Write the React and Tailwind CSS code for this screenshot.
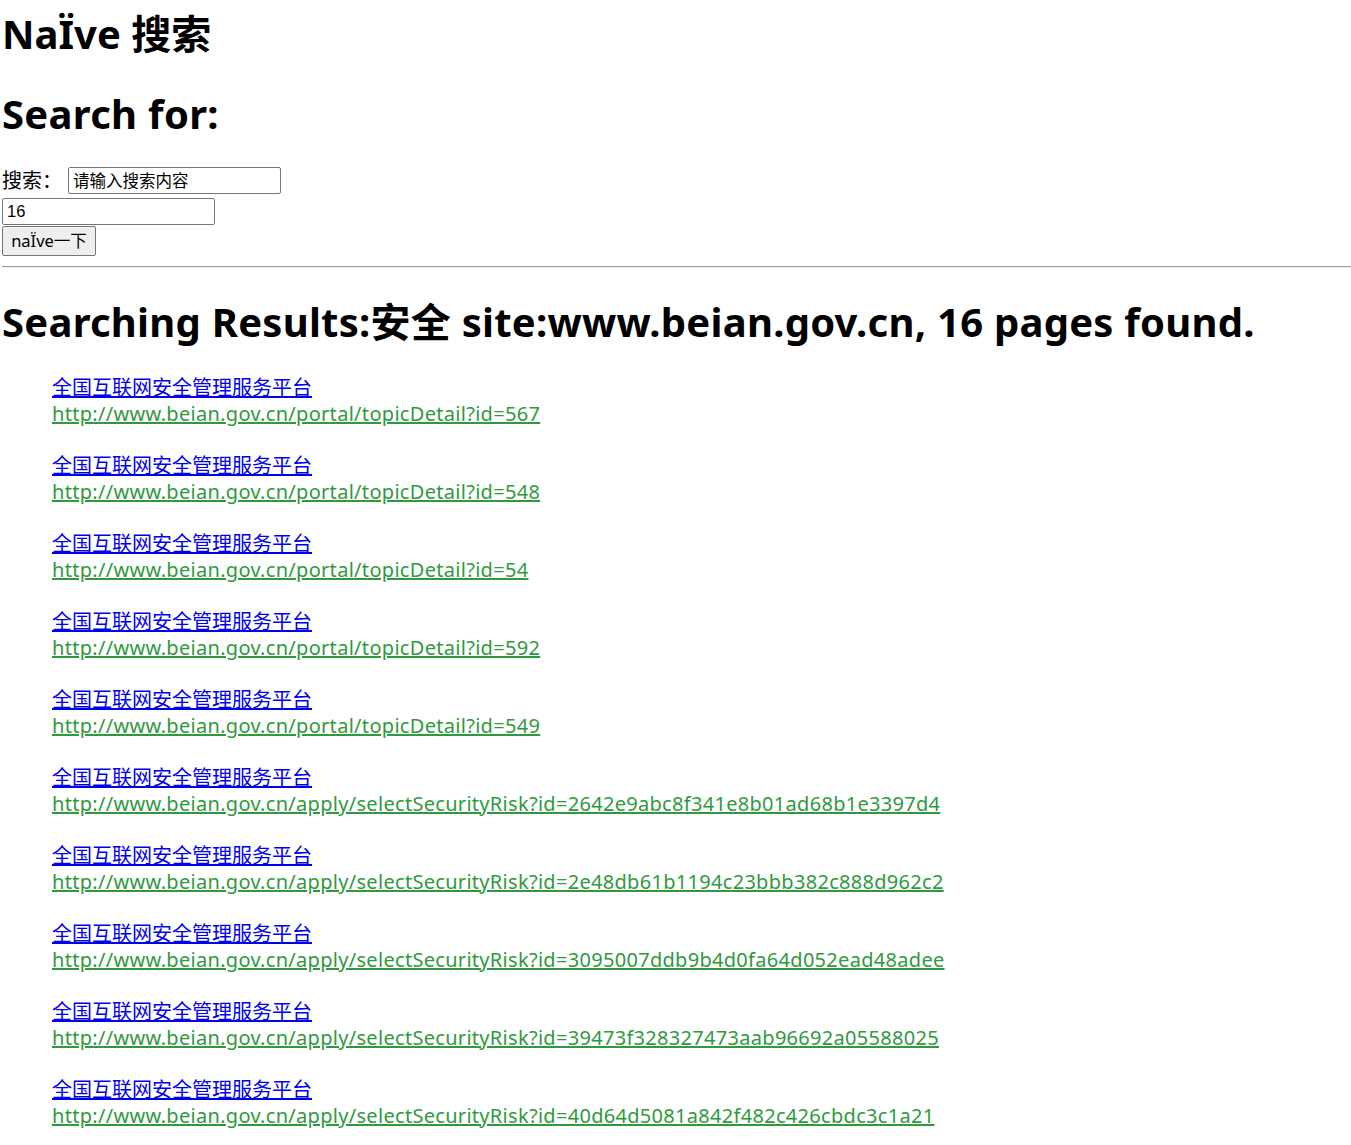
import { useState } from "react";

const results = [
  "http://www.beian.gov.cn/portal/topicDetail?id=567",
  "http://www.beian.gov.cn/portal/topicDetail?id=548",
  "http://www.beian.gov.cn/portal/topicDetail?id=54",
  "http://www.beian.gov.cn/portal/topicDetail?id=592",
  "http://www.beian.gov.cn/portal/topicDetail?id=549",
  "http://www.beian.gov.cn/apply/selectSecurityRisk?id=2642e9abc8f341e8b01ad68b1e3397d4",
  "http://www.beian.gov.cn/apply/selectSecurityRisk?id=2e48db61b1194c23bbb382c888d962c2",
  "http://www.beian.gov.cn/apply/selectSecurityRisk?id=3095007ddb9b4d0fa64d052ead48adee",
  "http://www.beian.gov.cn/apply/selectSecurityRisk?id=39473f328327473aab96692a05588025",
  "http://www.beian.gov.cn/apply/selectSecurityRisk?id=40d64d5081a842f482c426cbdc3c1a21",
];

export default function App() {
  const [query, setQuery] = useState("");
  const [count, setCount] = useState("16");

  return (
    <div className="pl-[2px] pt-[7px] text-black font-['Noto_Sans','Noto_Sans_CJK_SC',sans-serif] text-[20px] leading-[26px]">
      <h1 className="text-[40px] font-bold leading-[53px]">NaÏve 搜索</h1>
      <h1 className="mt-[27px] text-[40px] font-bold leading-[53px] tracking-[0.3px]">Search for:</h1>

      <form className="mt-[27px]" onSubmit={(e) => e.preventDefault()}>
        <div className="flex items-center h-[27px]">
          <label className="mr-[6px]">搜索：</label>
          <input
            type="text"
            value={query}
            onChange={(e) => setQuery(e.target.value)}
            placeholder="请输入搜索内容"
            className="w-[213px] h-[27px] px-[4px] border border-[#767676] rounded-[2px] text-[16.5px] placeholder:text-black outline-none"
          />
        </div>
        <div className="mt-[3px]">
          <input
            type="text"
            value={count}
            onChange={(e) => setCount(e.target.value)}
            className="w-[213px] h-[27px] px-[4px] border border-[#767676] rounded-[2px] text-[16.5px] outline-none font-['Liberation_Sans',sans-serif]"
          />
        </div>
        <button
          type="submit"
          className="mt-[1px] h-[30px] w-[94px] border border-[#767676] rounded-[2px] bg-[#efefef] text-[16.5px]"
        >
          naÏve一下
        </button>
      </form>

      <hr className="mt-[10px] border-t border-t-[#9a9a9a] border-b border-b-[#eeeeee]" />

      <h1 className="mt-[27px] text-[40px] font-bold leading-[53px] tracking-[0.25px] whitespace-nowrap">
        Searching Results:安全 site:www.beian.gov.cn, 16 pages found.
      </h1>

      <ul className="mt-[27px] pl-[50px]">
        {results.map((url) => (
          <li key={url} className="mb-[26px]">
            <a href="#" className="block w-fit text-[#0000ee] underline">全国互联网安全管理服务平台</a>
            <a href="#" className="block w-fit text-[#2f9a3d] underline tracking-[0.3px]">{url}</a>
          </li>
        ))}
      </ul>
    </div>
  );
}
